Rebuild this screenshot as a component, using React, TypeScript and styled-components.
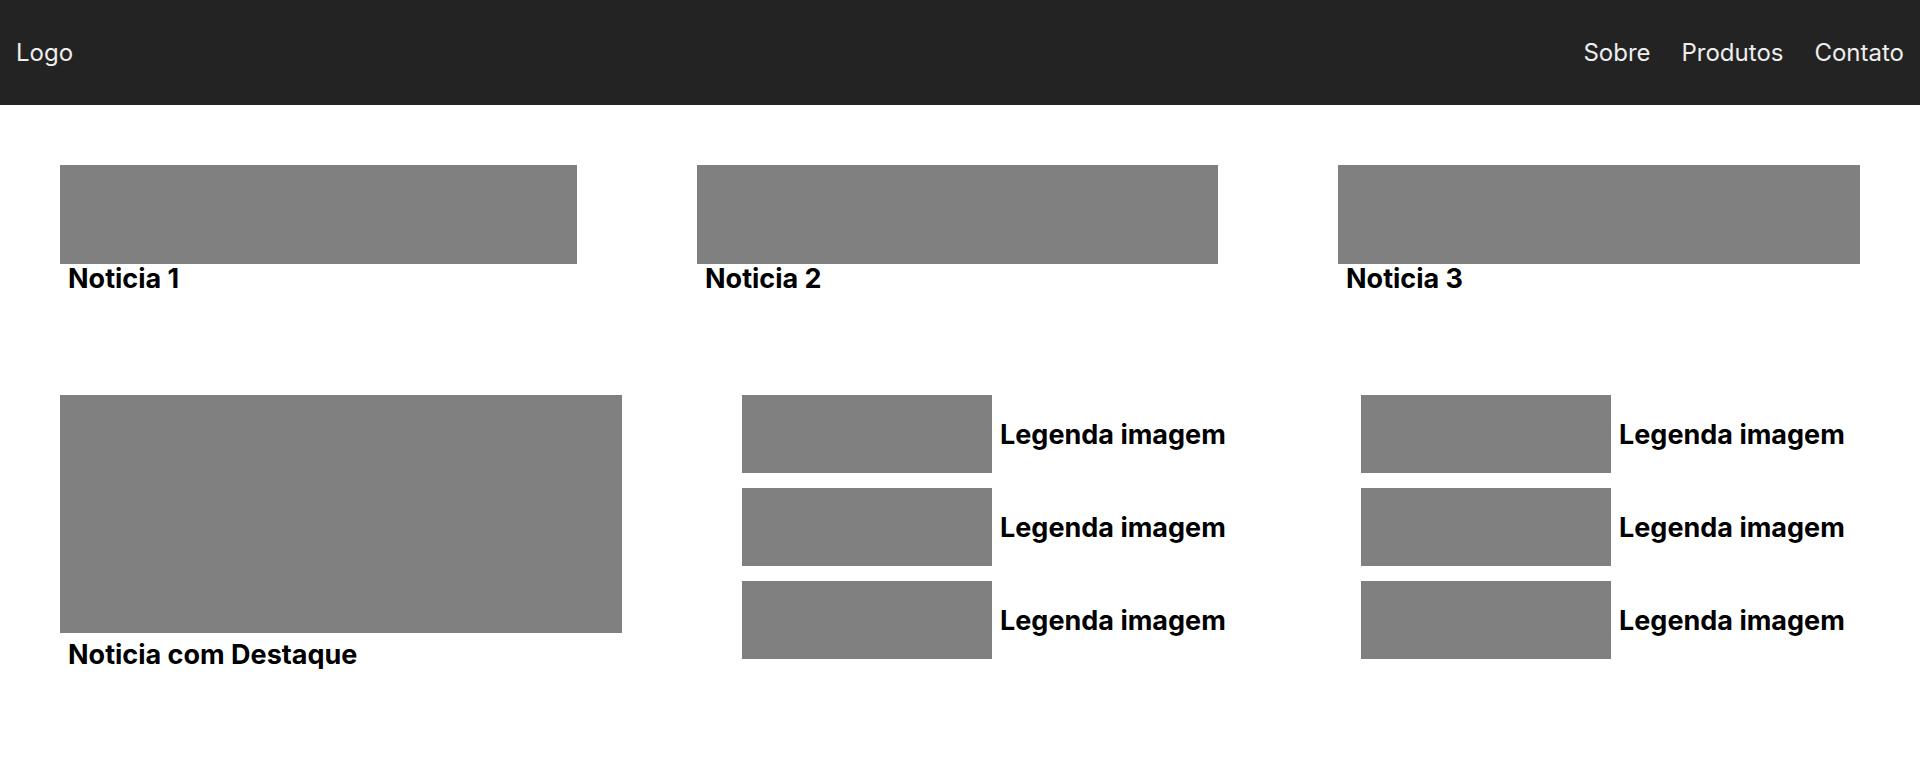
import React from "react";
import styled, { createGlobalStyle } from "styled-components";

const Global = createGlobalStyle`
  * { box-sizing: border-box; }
  body {
    margin: 0;
    background: #ffffff;
    font-family: Inter, "Noto Sans", sans-serif;
    color: #000;
  }
`;

const Header = styled.header`
  height: 105px;
  background: #232323;
  display: flex;
  align-items: center;
  justify-content: space-between;
  padding: 0 16px;
`;

const Brand = styled.div`
  color: #eeeeee;
  font-size: 24px;
`;

const Nav = styled.nav`
  display: flex;
  gap: 31px;
`;

const NavLink = styled.a`
  color: #eeeeee;
  font-size: 24px;
  text-decoration: none;
`;

const Main = styled.main`
  padding: 60px 60px 0;
  display: flex;
  flex-direction: column;
  gap: 102px;
`;

const TopRow = styled.section`
  display: grid;
  grid-template-columns: 517fr 521fr 522fr;
  gap: 120px;
`;

const Card = styled.article`
  display: flex;
  flex-direction: column;
`;

const Thumb = styled.div<{ $h: number; $w?: number }>`
  background: #808080;
  height: ${(p) => p.$h}px;
  width: ${(p) => (p.$w ? `${p.$w}px` : "100%")};
  flex-shrink: 0;
`;

const Title = styled.h3<{ $featured?: boolean }>`
  margin: ${(p) => (p.$featured ? "7px 0 0" : "0")};
  padding-left: 8px;
  font-size: 27px;
  font-weight: 700;
  line-height: 29px;
`;

const BottomRow = styled.section`
  display: grid;
  grid-template-columns: 562px 1fr 1fr;
  gap: 120px;
  align-items: start;
`;

const List = styled.ul`
  list-style: none;
  margin: 0;
  padding: 0;
  display: flex;
  flex-direction: column;
  gap: 15px;
`;

const ListItem = styled.li`
  display: flex;
  align-items: center;
  gap: 8px;
`;

const Caption = styled.span`
  font-size: 27px;
  font-weight: 700;
`;

const captions = ["Legenda imagem", "Legenda imagem", "Legenda imagem"];

export default function App() {
  return (
    <>
      <Global />
      <Header>
        <Brand>Logo</Brand>
        <Nav>
          <NavLink>Sobre</NavLink>
          <NavLink>Produtos</NavLink>
          <NavLink>Contato</NavLink>
        </Nav>
      </Header>
      <Main>
        <TopRow>
          {["Noticia 1", "Noticia 2", "Noticia 3"].map((t) => (
            <Card key={t}>
              <Thumb $h={99} />
              <Title>{t}</Title>
            </Card>
          ))}
        </TopRow>
        <BottomRow>
          <Card>
            <Thumb $h={238} />
            <Title $featured>Noticia com Destaque</Title>
          </Card>
          {[0, 1].map((col) => (
            <List key={col}>
              {captions.map((c, i) => (
                <ListItem key={i}>
                  <Thumb $h={78} $w={250} />
                  <Caption>{c}</Caption>
                </ListItem>
              ))}
            </List>
          ))}
        </BottomRow>
      </Main>
    </>
  );
}
